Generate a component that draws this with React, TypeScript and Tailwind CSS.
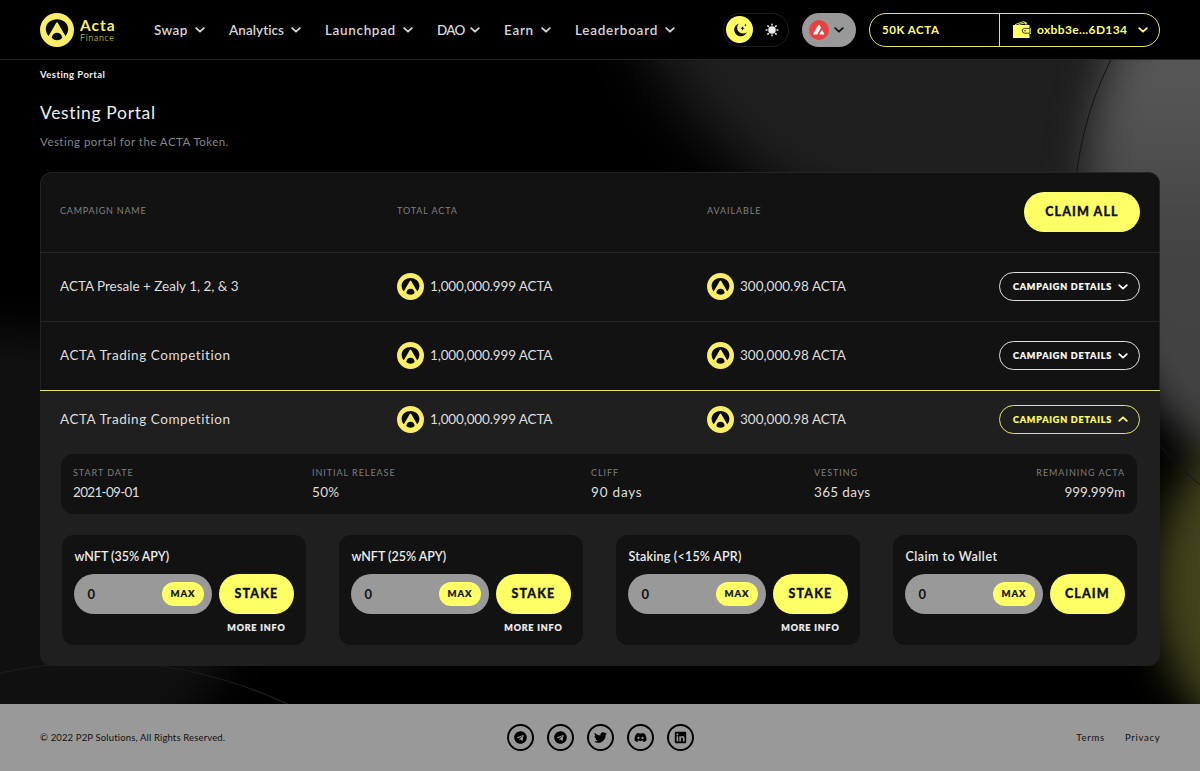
import type { ReactNode } from "react";
import { FaTelegram, FaTwitter, FaDiscord, FaLinkedin } from "react-icons/fa";

const NAV = [
  { label: "Swap", width: "w-[34px] tracking-[0.4px]" },
  { label: "Analytics", width: "w-[55px] tracking-[0.05px]" },
  { label: "Launchpad", width: "w-[71px] tracking-[0.65px]" },
  { label: "DAO", width: "w-[26px] tracking-[-0.7px]" },
  { label: "Earn", width: "w-[30px] tracking-[0.7px]" },
  { label: "Leaderboard", width: "w-[83px] tracking-[0.75px]" },
];

const ROWS = [
  { name: "ACTA Presale + Zealy 1, 2, & 3", tracking: "tracking-[-0.01px]", open: false },
  { name: "ACTA Trading Competition", tracking: "tracking-[0.56px]", open: false },
  { name: "ACTA Trading Competition", tracking: "tracking-[0.56px]", open: true },
];

const CARDS = [
  { title: "wNFT (35% APY)", tracking: "tracking-normal", action: "STAKE", info: true },
  { title: "wNFT (25% APY)", tracking: "tracking-normal", action: "STAKE", info: true },
  { title: "Staking (<15% APR)", tracking: "tracking-[0.22px]", action: "STAKE", info: true },
  { title: "Claim to Wallet", tracking: "tracking-[0.5px]", action: "CLAIM", info: false },
];

function Chevron({ up = false, className = "" }: { up?: boolean; className?: string }) {
  return (
    <svg viewBox="0 0 10 6" className={`h-[6px] w-[10px] shrink-0 ${className}`} fill="none" stroke="currentColor" strokeWidth="1.8" strokeLinecap="round" strokeLinejoin="round">
      <path d={up ? "M1.2 4.8 5 1.3l3.8 3.5" : "M1.2 1.2 5 4.7l3.8-3.5"} />
    </svg>
  );
}

function ActaMark({ className }: { className: string }) {
  return (
    <svg viewBox="0 0 34 34" className={`shrink-0 ${className}`}>
      <circle cx="17" cy="17" r="17" fill="#f9ed69" />
      <path d="M8.600 22.900C6.500 20.800 5.700 18 5.800 15.300 6.400 9.800 11.100 6.200 17 6.200s10.600 3.600 11.200 9.100c.1 2.700-.7 5.500-2.800 7.600L17.900 10.100a1.050 1.050 0 0 0-1.800 0L8.600 22.900Z" fill="#0b0b05" />
      <path d="M11.700 24.800c.4-2.900 2.500-5 5.300-5s4.900 2.100 5.300 5c-1.400 1.700-3.200 2.500-5.300 2.500s-3.900-.8-5.300-2.500Z" fill="#0b0b05" />
    </svg>
  );
}

function Backdrop() {
  return (
    <svg viewBox="0 0 1200 644" className="absolute inset-0 h-full w-full">
      <defs>
        <filter id="soft" x="-50%" y="-50%" width="200%" height="200%" colorInterpolationFilters="sRGB"><feGaussianBlur stdDeviation="30" /></filter>
        <filter id="softer" x="-50%" y="-50%" width="200%" height="200%" colorInterpolationFilters="sRGB"><feGaussianBlur stdDeviation="20" /></filter>
        <linearGradient id="orb" x1="0" y1="0" x2="0" y2="1">
          <stop offset="0" stopColor="#585858" />
          <stop offset="0.35" stopColor="#555" />
          <stop offset="0.6" stopColor="#434343" />
          <stop offset="1" stopColor="#424242" />
        </linearGradient>
      </defs>
      <rect width="1200" height="644" fill="#000" />
      <circle cx="980" cy="-180" r="370" fill="#1f1f1f" filter="url(#soft)" />
      <ellipse cx="0" cy="500" rx="255" ry="230" fill="#101010" filter="url(#softer)" />
      <ellipse cx="1330" cy="130" rx="242" ry="305" fill="url(#orb)" filter="url(#softer)" />
      <ellipse cx="1300" cy="525" rx="145" ry="172" fill="#43431d" filter="url(#softer)" />
      <circle cx="1424" cy="156" r="350" fill="none" stroke="#141414" strokeWidth="1" />
      <circle cx="99" cy="1045" r="443" fill="none" stroke="#1c1c1c" strokeWidth="1.200" />
    </svg>
  );
}

function Amount({ children, tracking = "" }: { children: ReactNode; tracking?: string }) {
  return (
    <div className={`flex items-center gap-[6px] ${tracking}`}>
      <ActaMark className="h-[27px] w-[27px]" />
      <span>{children}</span>
    </div>
  );
}

function DetailsButton({ open }: { open: boolean }) {
  return (
    <button className={`flex h-[29px] w-[141px] items-center justify-between rounded-full border pr-[11px] pl-[13px] text-[9px] font-black tracking-[0.8px] whitespace-nowrap [-webkit-text-stroke:0.2px] ${open ? "border-[#e5e562] text-[#ffff66]" : "border-[#e0e0e0] text-white"}`}>
      <span className="pt-px">CAMPAIGN DETAILS</span>
      <Chevron up={open} />
    </button>
  );
}

function Stat({ label, value, className = "", tracking = "" }: { label: string; value: string; className?: string; tracking?: string }) {
  return (
    <div className={className}>
      <div className="h-[14px] text-[9px] leading-[14px] tracking-[0.95px] text-[#7d7d7d]">{label}</div>
      <div className={`mt-[2px] h-[20px] text-[13.5px] leading-[20px] text-[#dedede] ${tracking}`}>{value}</div>
    </div>
  );
}

function Header() {
  return (
    <header className="relative flex h-[60px] shrink-0 items-center border-b border-[#272727] bg-black pl-10">
      <div className="flex w-[114px] items-center gap-[6px]">
        <ActaMark className="h-[34px] w-[34px]" />
        <div className="text-[#f9ed69]">
          <div className="text-[15.5px] leading-[15px] font-bold tracking-[1px]">Acta</div>
          <div className="text-[9px] leading-[9px] font-light tracking-[0.65px]">Finance</div>
        </div>
      </div>
      <nav className="flex w-[569px] gap-6">
        {NAV.map((n) => (
          <a key={n.label} className="flex items-center gap-[7px] text-[13.5px] font-semibold text-[#d6d6d6]">
            <span className={`pt-px whitespace-nowrap ${n.width}`}>{n.label}</span>
            <Chevron />
          </a>
        ))}
      </nav>
      <div className="flex h-[34px] w-[66px] items-center justify-between rounded-full border border-[#1d1d1d] pr-[9px] pl-[2px]">
        <span className="flex h-[27px] w-[27px] items-center justify-center rounded-full bg-[#ffff66]">
          <svg viewBox="0 0 16 16" className="h-4 w-4" fill="#111">
            <path d="M7 1.500A6.500 6.500 0 1 0 14.800 10 4.900 4.900 0 0 1 7 1.500Z" />
            <path d="m10.500 4.200.7 1.400 1.400.7-1.400.7-.7 1.400-.7-1.400-1.400-.7 1.400-.7ZM13.400 1.700l.5 1 .9.400-.9.400-.5 1-.4-1-1-.4 1-.4Z" />
          </svg>
        </span>
        <svg viewBox="0 0 14 14" className="h-[14px] w-[14px]" stroke="#eee" strokeWidth="1.500" strokeLinecap="round" fill="#eee">
          <circle cx="7" cy="7" r="3" />
          <path d="M7 1.200V2M7 12v.8M1.200 7H2M12 7h.8M2.900 2.900l.6.6M10.500 10.500l.6.6M2.900 11.100l.6-.6M10.500 3.500l.6-.6" />
        </svg>
      </div>
      <div className="ml-[13px] flex h-[34px] w-[54px] items-center gap-[5px] rounded-full bg-[#999] pl-[7px]">
        <svg viewBox="0 0 20 20" className="h-[20px] w-[20px]">
          <circle cx="10" cy="10" r="10" fill="#e84142" />
          <path d="M9.200 5.200c.4-.7 1.200-.7 1.600 0l.9 1.700c.2.400.2.800 0 1.200L8.500 13.900c-.2.500-.6.700-1.100.7H5.100c-.8 0-1.100-.6-.7-1.200ZM12.200 10.800c.4-.7 1-.7 1.400 0l1.500 2.600c.4.700.1 1.200-.7 1.200h-3c-.8 0-1.100-.5-.7-1.200Z" fill="#fff" />
        </svg>
        <Chevron className="text-[#111]" />
      </div>
      <div className="ml-[13px] flex h-[34px] w-[291px] items-stretch rounded-full border border-[#e5e562] text-[11.5px] font-bold text-[#ffff66]">
        <div className="flex w-[130px] items-center border-r border-[#e5e562] pt-px pl-[12px] tracking-[0.55px]">50K ACTA</div>
        <div className="flex items-center pl-[13px]">
          <svg viewBox="0 0 18 17" className="h-[17px] w-[18px]">
            <path d="M0 4h16.500v3H18v6h-1.500v4H0V4Z" fill="#ffff66" />
            <path d="M2 3.600 10.500.6l1.300.4 1 2.600" fill="none" stroke="#ffff66" strokeWidth="0.9" />
            <path d="m5.500 3.600 7.800-2 .8 2" fill="none" stroke="#ffff66" strokeWidth="0.9" />
            <path d="M17 7.400h-5.600a2.100 2.100 0 0 0-2.100 2.500 2.500 2.500 0 0 0 2.500 2.300H17Z" fill="#ffff66" stroke="#111" strokeWidth="0.8" />
            <circle cx="12" cy="9.800" r="0.700" fill="#111" />
          </svg>
          <span className="ml-[6px] w-[91px] pt-px text-[12px] tracking-[0.35px] whitespace-nowrap">oxbb3e...6D134</span>
          <Chevron className="ml-[10px]" />
        </div>
      </div>
    </header>
  );
}

function ClaimCard({ title, tracking, action, info }: { title: string; tracking: string; action: string; info: boolean }) {
  return (
    <div className="h-[110px] rounded-xl bg-[#121212] pt-[13px] pl-[12.4px]">
      <h3 className={`h-[18px] text-[12.5px] leading-[18px] font-semibold text-[#ededed] ${tracking}`}>{title}</h3>
      <div className="mt-[8px] flex gap-[7px]">
        <div className="flex h-10 w-[137.5px] items-center justify-between rounded-full bg-[#999] pr-2 pl-[13px]">
          <span className="pt-px text-[13px] font-bold text-[#111]">0</span>
          <span className="flex h-6 w-[42px] items-center justify-center rounded-full bg-[#ffff66] pt-px text-[9.5px] font-black tracking-[0.8px] text-[#111] [-webkit-text-stroke:0.2px]">MAX</span>
        </div>
        <div className="flex w-[75px] flex-col items-center">
          <button className="h-10 w-[75px] rounded-full bg-[#ffff66] pt-px text-[12.5px] font-black tracking-[1.1px] text-[#111] [-webkit-text-stroke:0.3px]">{action}</button>
          {info && <a className="mt-[7px] text-[9px] leading-[14px] font-black tracking-[0.8px] whitespace-nowrap text-[#f0f0f0] [-webkit-text-stroke:0.2px]">MORE INFO</a>}
        </div>
      </div>
    </div>
  );
}

export default function App() {
  return (
    <div className="flex h-[771px] w-[1200px] flex-col overflow-hidden bg-black font-['Lato',sans-serif] [font-variant-ligatures:none]">
      <Header />
      <main className="relative h-[644px] shrink-0 overflow-hidden">
        <Backdrop />
        <div className="relative px-10">
          <div className="pt-[7px] text-[9.5px] leading-[15px] font-bold tracking-[0.45px] text-[#f0f0f0]">Vesting Portal</div>
          <h1 className="mt-[19px] text-[17.5px] leading-[24px] tracking-[0.65px] text-[#ededed]">Vesting Portal</h1>
          <p className="mt-[9px] text-[11.5px] leading-4 tracking-[0.46px] text-[#858585]">Vesting portal for the ACTA Token.</p>

          <section className="mt-[22px] h-[494px] overflow-hidden rounded-xl bg-[#1f1f1f]">
            <div className="rounded-t-xl border border-b-0 border-[#222] bg-[#121212]">
              <div className="grid h-[79px] grid-cols-[337px_310px_1fr_auto] items-center pr-[19px] pl-[19px] text-[9px] tracking-[0.9px] text-[#808080]">
                <span className="-mt-1 tracking-[0.78px]">CAMPAIGN NAME</span>
                <span className="-mt-1">TOTAL ACTA</span>
                <span className="-mt-1">AVAILABLE</span>
                <button className="-mt-[2px] h-10 w-[116px] rounded-full bg-[#ffff66] pt-px text-[12.5px] font-black tracking-[1.1px] text-[#111] [-webkit-text-stroke:0.3px]">CLAIM ALL</button>
              </div>
            </div>
            {ROWS.map((r, i) => (
              <div
                key={i}
                className={`grid grid-cols-[337px_310px_1fr_auto] items-center border-t text-[13.5px] text-[#dedede] ${
                  r.open ? "h-[64px] border-t-[#e5e562] px-5 pb-[7px]" : "h-[69px] border-x border-x-[#222] border-t-[#242424] bg-[#121212] px-[19px] pb-px"
                }`}
              >
                <span className={r.tracking}>{r.name}</span>
                <Amount tracking="tracking-[-0.13px]">1,000,000.999 ACTA</Amount>
                <Amount>300,000.98 ACTA</Amount>
                <DetailsButton open={r.open} />
              </div>
            ))}
            <div className="mr-[23px] ml-[21px] flex h-[60px] rounded-xl bg-[#121212] pt-[12px] pr-[12px] pl-3">
              <Stat label="START DATE" value="2021-09-01" className="w-[239px]" tracking="tracking-[-0.68px]" />
              <Stat label="INITIAL RELEASE" value="50%" className="w-[279px]" tracking="tracking-[0.3px]" />
              <Stat label="CLIFF" value="90 days" className="w-[223px]" tracking="tracking-[0.8px]" />
              <Stat label="VESTING" value="365 days" tracking="tracking-[0.35px]" />
              <Stat label="REMAINING ACTA" value="999.999m" className="ml-auto text-right" tracking="tracking-[-0.1px]" />
            </div>
            <div className="mt-[21px] mr-[23px] ml-[22px] grid grid-cols-4 gap-x-[33px]">
              {CARDS.map((c) => (
                <ClaimCard key={c.title} {...c} />
              ))}
            </div>
          </section>
        </div>
      </main>
      <footer className="flex h-[67px] shrink-0 items-center justify-between bg-[#999] px-10 text-[9.5px] text-[#111]">
        <span className="w-[300px] pt-px tracking-[0.15px]">© 2022 P2P Solutions, All Rights Reserved.</span>
        <div className="flex gap-[13px]">
          {[FaTelegram, FaTelegram, FaTwitter, FaDiscord, FaLinkedin].map((Icon, i) => (
            <span key={i} className="flex h-[27px] w-[27px] items-center justify-center rounded-full border-2 border-black text-black">
              <Icon className="h-[13px] w-[13px]" />
            </span>
          ))}
        </div>
        <div className="flex w-[300px] justify-end gap-5 pt-px tracking-[0.75px]">
          <span>Terms</span>
          <span className="-mr-[0.5px]">Privacy</span>
        </div>
      </footer>
    </div>
  );
}
